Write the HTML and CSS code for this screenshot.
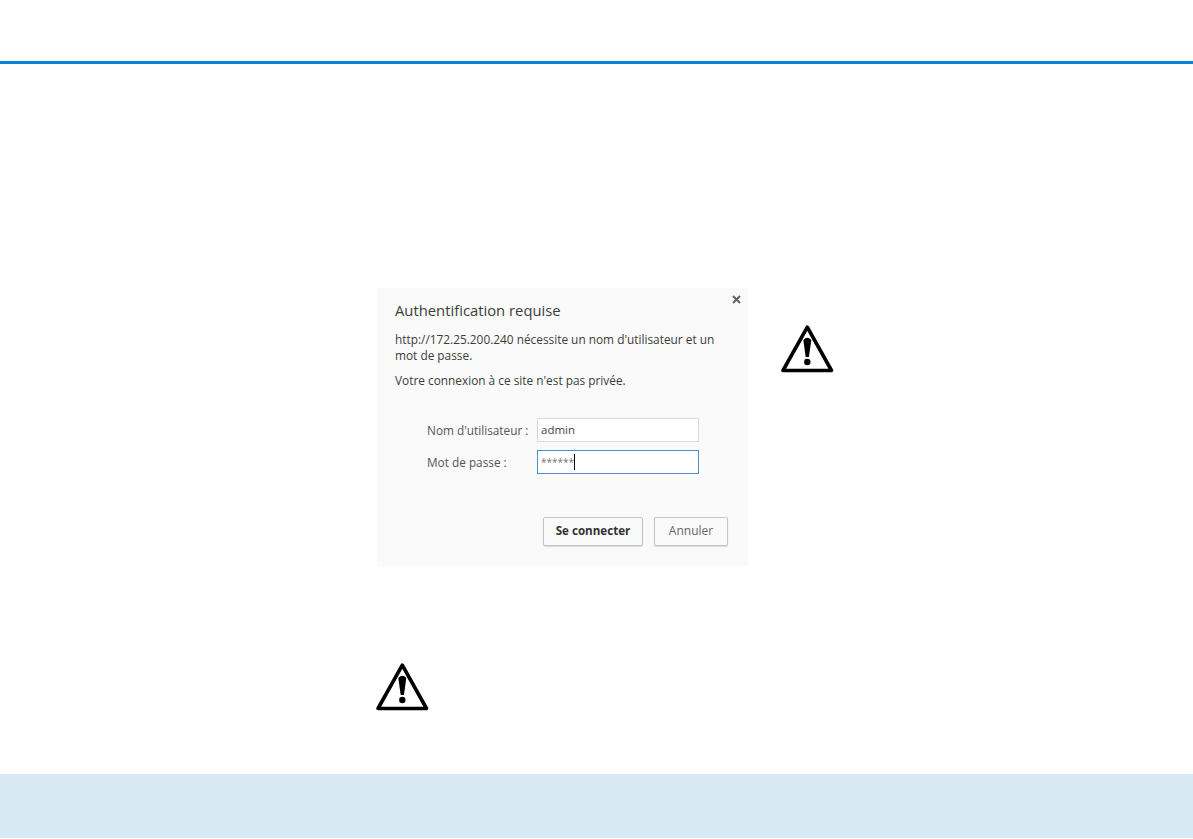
FILE: index.html
```html
<!DOCTYPE html>
<html lang="fr">
<head>
<meta charset="utf-8">
<title>Authentification requise</title>
<link rel="stylesheet" href="styles.css">
</head>
<body>
<header class="topbar"></header>
<main class="content">
  <div class="figure-row">
    <section class="dialog">
      <div class="dialog-head">
        <h1 class="dialog-title">Authentification requise</h1>
        <span class="close">
          <svg width="9" height="9" viewBox="0 0 9 9"><path d="M1 1L8 8M8 1L1 8" stroke="#5f6368" stroke-width="2"/></svg>
        </span>
      </div>
      <p class="msg msg-url">http://172.25.200.240 nécessite un nom d'utilisateur et un mot de passe.</p>
      <p class="msg msg-priv">Votre connexion à ce site n'est pas privée.</p>
      <div class="form">
        <div class="field">
          <span class="label">Nom d'utilisateur :</span>
          <span class="input">admin</span>
        </div>
        <div class="field">
          <span class="label">Mot de passe :</span>
          <span class="input input-focus"><span class="stars">******</span><span class="caret"></span></span>
        </div>
      </div>
      <div class="actions">
        <span class="btn btn-primary">Se connecter</span>
        <span class="btn btn-cancel">Annuler</span>
      </div>
    </section>
    <svg class="warn warn-side" width="55" height="50" viewBox="0 0 55 50">
      <path d="M27.3 3.2L51.5 46.5H3Z" fill="#fff" stroke="#000" stroke-width="3.6" stroke-linejoin="round"/>
      <path d="M23.3 16Q27.3 11.5 31.3 16L28.9 33H25.7Z" fill="#000"/>
      <circle cx="27.3" cy="38" r="3.2" fill="#000"/>
    </svg>
  </div>
  <svg class="warn warn-note" width="55" height="50" viewBox="0 0 55 50">
    <path d="M27.3 3.2L51.5 46.5H3Z" fill="#fff" stroke="#000" stroke-width="3.6" stroke-linejoin="round"/>
    <path d="M23.3 16Q27.3 11.5 31.3 16L28.9 33H25.7Z" fill="#000"/>
    <circle cx="27.3" cy="38" r="3.2" fill="#000"/>
  </svg>
</main>
<footer class="bottombar"></footer>
</body>
</html>
```
FILE: styles.css
```css
html, body {
  margin: 0;
  padding: 0;
  height: 839px;
  background: #fff;
  overflow: hidden;
}
body {
  display: flex;
  flex-direction: column;
  font-family: "Open Sans", "Noto Sans", sans-serif;
  color: #333;
}
.topbar {
  height: 61px;
  border-bottom: 3px solid #0785dc;
  flex: none;
}
.content {
  flex: 1;
  padding: 224px 0 0 376px;
  display: flex;
  flex-direction: column;
  align-items: flex-start;
}
.figure-row {
  display: flex;
  align-items: flex-start;
  gap: 32px;
  margin-left: 1px;
}
.dialog {
  width: 371px;
  height: 278px;
  box-sizing: border-box;
  background: #fafafa;
  padding: 0 18px 0 18px;
  display: flex;
  flex-direction: column;
}
.dialog-head {
  display: flex;
  justify-content: space-between;
  align-items: flex-start;
  margin-right: -11px;
}
.dialog-title {
  margin: 13px 0 0;
  font-size: 14.8px;
  line-height: 18px;
  font-weight: 400;
  color: #3c3c3c;
}
.close {
  display: flex;
  margin-top: 7px;
}
.msg {
  margin: 0;
  font-size: 11.85px;
  line-height: 16px;
  color: #3c3c3c;
  width: 330px;
}
.msg-url { margin-top: 12px; }
.msg-priv { margin-top: 9px; }
.form {
  margin: 30px 0 0 32px;
  display: flex;
  flex-direction: column;
  gap: 8px;
}
.field {
  display: flex;
  align-items: center;
}
.label {
  width: 110px;
  font-size: 11.8px;
  color: #555;
}
.input {
  width: 162px;
  height: 24px;
  box-sizing: border-box;
  border: 1px solid #dadada;
  background: #fff;
  padding: 0 0 2px 3px;
  font-size: 11.5px;
  line-height: 21px;
  color: #444;
  display: flex;
  align-items: center;
}
.input-focus {
  border-color: #4f8fd0;
  padding-bottom: 0;
}
.stars {
  color: #777;
  font-size: 10px;
}
.caret {
  width: 1px;
  height: 16px;
  background: #000;
}
.actions {
  margin-top: 43px;
  display: flex;
  justify-content: flex-end;
  gap: 11px;
  margin-right: 2px;
}
.btn {
  height: 29px;
  box-sizing: border-box;
  border: 1px solid #c4c4c4;
  border-radius: 2px;
  background: #fafafa;
  box-shadow: 0 1px 1px rgba(0,0,0,.12);
  padding-bottom: 2px;
  display: flex;
  align-items: center;
  justify-content: center;
  font-size: 11.6px;
}
.btn-primary {
  width: 100px;
  font-weight: 700;
  color: #333;
}
.btn-cancel {
  width: 74px;
  font-size: 12px;
  color: #666;
}
.warn { flex: none; display: block; }
.warn-side { margin-top: 36px; }
.warn-note { margin-top: 96px; margin-left: -1px; }
.bottombar {
  height: 64px;
  margin-bottom: 1px;
  background: #d9e9f4;
  flex: none;
}
```
